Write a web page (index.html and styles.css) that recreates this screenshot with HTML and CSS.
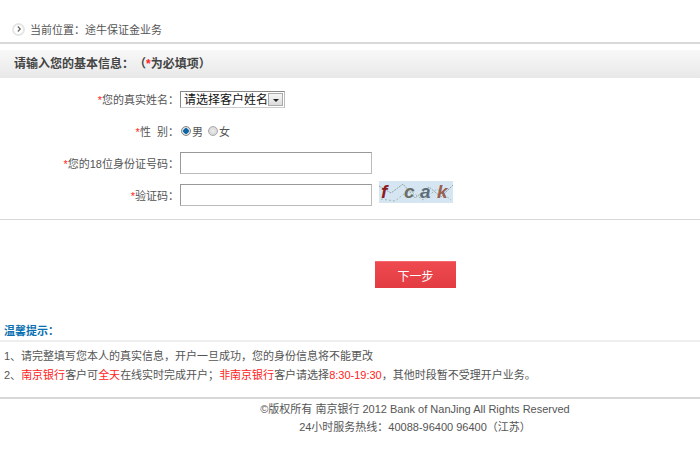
FILE: index.html
```html
<!DOCTYPE html>
<html lang="zh-CN">
<head>
    <meta charset="UTF-8">
    <title>途牛保证金业务</title>
    <link rel="stylesheet" href="styles.css">
</head>
<body>

    <div class="crumb">
        <span class="crumb-icon">
            <svg width="8" height="8" viewBox="0 0 8 8"><path d="M2.8 1.5 L5.3 4 L2.8 6.5" fill="none" stroke="#666" stroke-width="1.2"/></svg>
        </span>
        <span>当前位置：途牛保证金业务</span>
    </div>

    <div class="section-title">请输入您的基本信息：（<span class="req">*</span>为必填项）</div>

    <form class="info-form">
        <div class="form-row">
            <label class="form-label"><span class="req">*</span>您的真实姓名：</label>
            <div class="select-box">
                <select class="name-select">
                    <option>请选择客户姓名</option>
                </select>
                <span class="select-arrow"></span>
            </div>
        </div>
        <div class="form-row">
            <label class="form-label"><span class="req">*</span>性&nbsp;&nbsp;别：</label>
            <div class="radios">
                <input type="radio" name="sex" checked><span>男</span>
                <input type="radio" name="sex"><span>女</span>
            </div>
        </div>
        <div class="form-row">
            <label class="form-label"><span class="req">*</span>您的18位身份证号码：</label>
            <input class="text-input" type="text">
        </div>
        <div class="form-row">
            <label class="form-label"><span class="req">*</span>验证码：</label>
            <input class="text-input" type="text">
            <svg class="captcha" width="74" height="22" viewBox="0 0 74 22">
                <rect width="74" height="22" fill="#d5e6f2"/>
                <path d="M0 5 L12 12 L24 3 L36 17 L50 6 L62 16 L74 4" fill="none" stroke="#8fa3a8" stroke-width="1" stroke-dasharray="2 1"/>
                <path d="M2 18 L16 20 L30 9 L44 19 L58 8 L72 19" fill="none" stroke="#a3b5b0" stroke-width="1" stroke-dasharray="2 2"/>
                <text x="2" y="17" class="cap-f">f</text>
                <text x="25" y="17" class="cap-c">c</text>
                <text x="41" y="17" class="cap-a">a</text>
                <text x="58" y="17" class="cap-k">k</text>
            </svg>
        </div>
    </form>

    <div class="actions">
        <button class="next-button" type="button">下一步</button>
    </div>

    <div class="tips-title">温馨提示：</div>
    <div class="tips">
        <p>1、请完整填写您本人的真实信息，开户一旦成功，您的身份信息将不能更改</p>
        <p>2、<span class="red">南京银行</span>客户可<span class="red">全天</span>在线实时完成开户；<span class="red">非南京银行</span>客户请选择<span class="red">8:30-19:30</span>，其他时段暂不受理开户业务。</p>
    </div>

    <div class="footer">
        <p>©版权所有 南京银行 2012 Bank of NanJing All Rights Reserved</p>
        <p>24小时服务热线：40088-96400 96400（江苏）</p>
    </div>

</body>
</html>
```

FILE: styles.css
```css
body {
    margin: 0;
    font-family: "Liberation Sans", "Noto Sans CJK SC", sans-serif;
    font-size: 11px;
    color: #555;
    background-color: #fff;
    text-spacing-trim: space-all;
}
p {
    margin: 0;
}
.req, .red {
    color: #f22;
}
.crumb {
    display: flex;
    align-items: center;
    gap: 5px;
    height: 44px;
    padding: 16px 0 0 12px;
    box-sizing: border-box;
    border-bottom: 2px solid #d8d8d8;
}
.crumb-icon {
    display: flex;
    align-items: center;
    justify-content: center;
    width: 9px;
    height: 9px;
    border: 2px solid #e6e6e6;
    border-radius: 50%;
}
.section-title {
    margin-top: 6px;
    height: 28px;
    line-height: 28px;
    padding-left: 14px;
    font-size: 12px;
    font-weight: bold;
    color: #444;
    background: linear-gradient(#f8f8f8, #e8e8e8);
}
.info-form {
    padding-top: 5px;
    border-bottom: 1px solid #d8d8d8;
    height: 136px;
}
.form-row {
    display: flex;
    align-items: center;
    height: 32px;
}
.form-label {
    width: 179px;
    margin-right: 1px;
    text-align: right;
    flex-shrink: 0;
}
.select-box {
    display: flex;
    box-sizing: border-box;
    width: 105px;
    height: 17px;
    padding: 1px;
    border: 1px solid #888;
    border-right-color: #bbb;
    border-bottom-color: #ccc;
}
.name-select {
    flex: 1;
    width: 0;
    padding: 0 0 0 2px;
    border: 0;
    outline: 0;
    appearance: none;
    background: #fff;
    font-family: inherit;
    font-size: 12px;
    color: #111;
}
.select-arrow {
    position: relative;
    width: 15px;
    border: 1px solid #aaa;
    box-sizing: border-box;
    background: linear-gradient(#f6f6f6, #dcdcdc);
}
.select-arrow::after {
    content: "";
    position: absolute;
    left: 4px;
    top: 5px;
    border: 3px solid transparent;
    border-top: 3px solid #222;
    border-bottom: 0;
}
.radios {
    display: flex;
    align-items: center;
    gap: 1px;
}
.radios input {
    appearance: none;
    width: 10px;
    height: 10px;
    margin: 0 0 0 1px;
    border: 1px solid #aaa;
    border-radius: 50%;
    background: radial-gradient(#eee, #ccc);
}
.radios span {
    margin-right: 3px;
}
.radios input:checked {
    background: radial-gradient(#0a66a8 2.5px, #ddd 3px);
    border-color: #888;
}
.text-input {
    width: 192px;
    height: 22px;
    padding: 0;
    box-sizing: border-box;
    border: 1px solid #bbb;
    border-top-color: #999;
    border-left-color: #999;
    background: #fff;
}
.captcha {
    margin: -6px 0 0 7px;
}
.captcha text {
    font-family: "Liberation Sans", sans-serif;
    font-size: 19px;
    font-weight: bold;
    font-style: italic;
}
.cap-f {
    fill: #8e1a22;
}
.cap-c {
    fill: #6b6f66;
}
.cap-a {
    fill: #5f6d78;
}
.cap-k {
    fill: #9a6050;
}
.actions {
    padding: 41px 0 0 375px;
}
.next-button {
    display: block;
    width: 81px;
    height: 27px;
    padding: 0;
    border: 0;
    border-top: 1px solid #f26a6e;
    background: linear-gradient(#ef4a50, #e23c42);
    color: #fff;
    font-family: inherit;
    font-size: 12px;
}
.tips-title {
    margin-top: 34px;
    padding: 0 0 2px 4px;
    height: 16px;
    line-height: 18px;
    font-weight: bold;
    color: #0a70b0;
    border-bottom: 2px solid #eee;
}
.tips {
    padding: 5px 0 12px 4px;
    line-height: 19px;
}
.footer {
    border-top: 2px solid #d8d8d8;
    padding: 1px 0 0 130px;
    text-align: center;
    line-height: 18px;
}
```
